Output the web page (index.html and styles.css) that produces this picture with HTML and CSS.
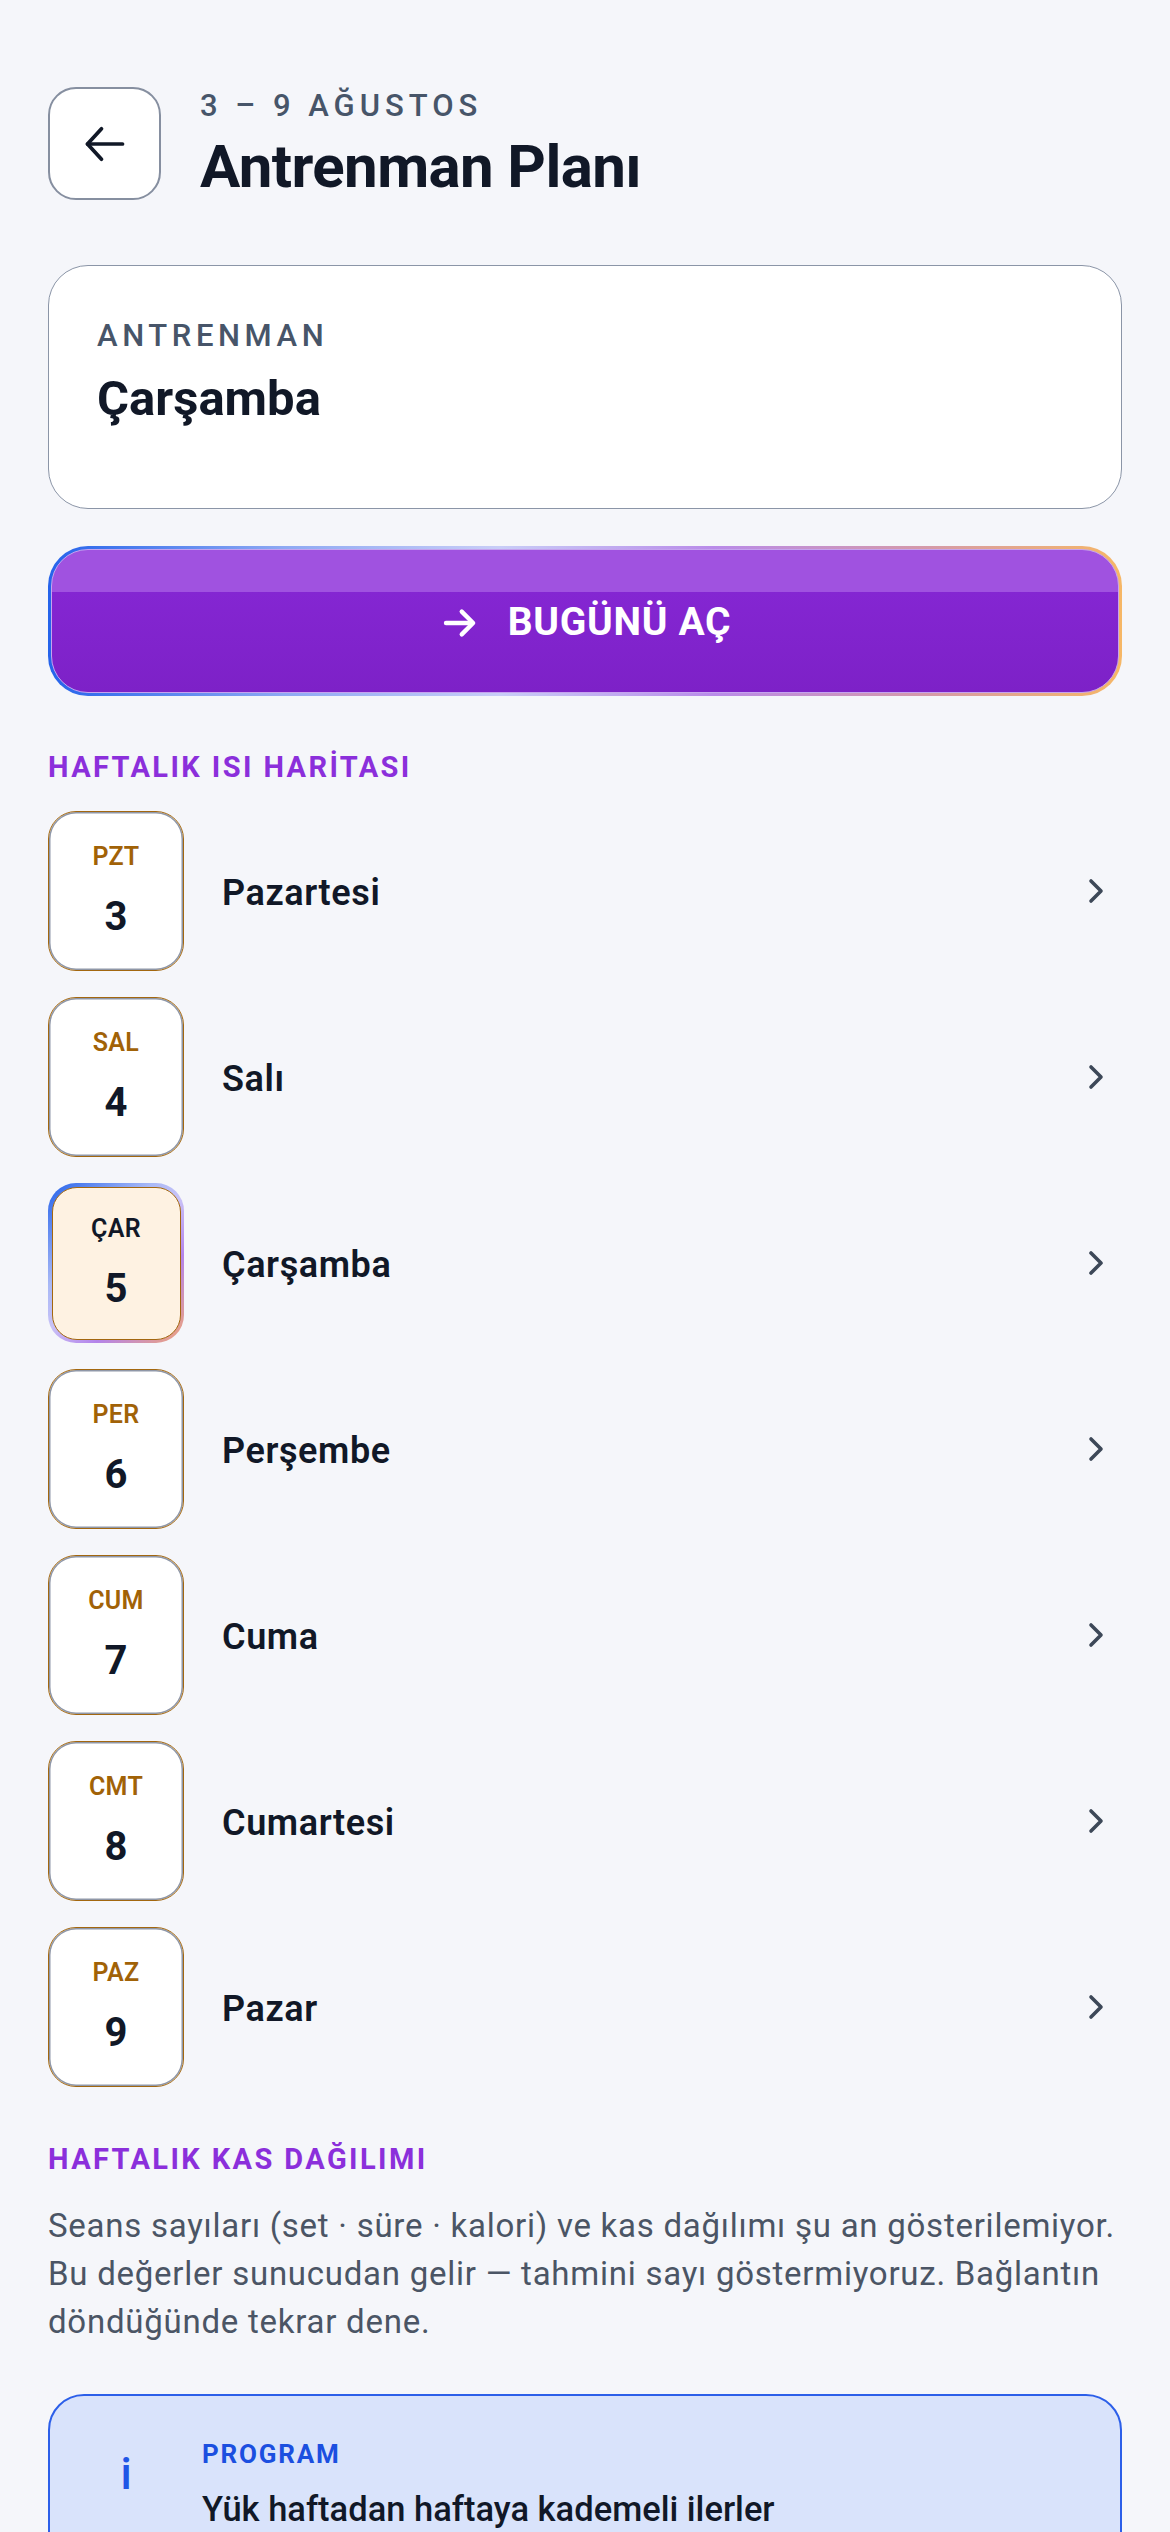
FILE: index.html
```html
<!DOCTYPE html>
<html lang="tr">
<head>
<meta charset="utf-8">
<title>Antrenman Planı</title>
<link rel="stylesheet" href="styles.css">
</head>
<body>
<div class="page">
  <header class="header">
    <button class="back-btn" aria-label="Geri">
      <svg width="56" height="56" viewBox="0 0 24 24" fill="none" stroke="#111827" stroke-width="1.6" stroke-linecap="round" stroke-linejoin="round"><path d="M19.5 12H4.5"/><path d="M10.5 5.5L4.5 12l6 6.5"/></svg>
    </button>
    <div class="header-text">
      <div class="header-label">3 – 9 AĞUSTOS</div>
      <h1 class="header-title">Antrenman Planı</h1>
    </div>
  </header>

  <section class="today-card">
    <div class="today-label">ANTRENMAN</div>
    <div class="today-name">Çarşamba</div>
  </section>

  <div class="cta-ring">
    <button class="cta">
      <svg width="42" height="42" viewBox="0 0 24 24" fill="none" stroke="#ffffff" stroke-width="2.5" stroke-linecap="round" stroke-linejoin="round"><path d="M4 12h15"/><path d="M13 5.5l6.5 6.5-6.5 6.5"/></svg>
      <span>BUGÜNÜ AÇ</span>
    </button>
  </div>

  <h2 class="section-title">HAFTALIK ISI HARİTASI</h2>

  <ul class="days">
    <li class="day">
      <div class="day-box"><span class="day-abbr">PZT</span><span class="day-num">3</span></div>
      <span class="day-name">Pazartesi</span>
      <svg class="chev" width="16" height="26" viewBox="0 0 16 26" fill="none" stroke="#3d4858" stroke-width="3.6" stroke-linecap="round" stroke-linejoin="round"><path d="M3 3l10 10-10 10"/></svg>
    </li>
    <li class="day">
      <div class="day-box"><span class="day-abbr">SAL</span><span class="day-num">4</span></div>
      <span class="day-name">Salı</span>
      <svg class="chev" width="16" height="26" viewBox="0 0 16 26" fill="none" stroke="#3d4858" stroke-width="3.6" stroke-linecap="round" stroke-linejoin="round"><path d="M3 3l10 10-10 10"/></svg>
    </li>
    <li class="day day-today">
      <div class="day-ring"><div class="day-box"><span class="day-abbr">ÇAR</span><span class="day-num">5</span></div></div>
      <span class="day-name">Çarşamba</span>
      <svg class="chev" width="16" height="26" viewBox="0 0 16 26" fill="none" stroke="#3d4858" stroke-width="3.6" stroke-linecap="round" stroke-linejoin="round"><path d="M3 3l10 10-10 10"/></svg>
    </li>
    <li class="day">
      <div class="day-box"><span class="day-abbr">PER</span><span class="day-num">6</span></div>
      <span class="day-name">Perşembe</span>
      <svg class="chev" width="16" height="26" viewBox="0 0 16 26" fill="none" stroke="#3d4858" stroke-width="3.6" stroke-linecap="round" stroke-linejoin="round"><path d="M3 3l10 10-10 10"/></svg>
    </li>
    <li class="day">
      <div class="day-box"><span class="day-abbr">CUM</span><span class="day-num">7</span></div>
      <span class="day-name">Cuma</span>
      <svg class="chev" width="16" height="26" viewBox="0 0 16 26" fill="none" stroke="#3d4858" stroke-width="3.6" stroke-linecap="round" stroke-linejoin="round"><path d="M3 3l10 10-10 10"/></svg>
    </li>
    <li class="day">
      <div class="day-box"><span class="day-abbr">CMT</span><span class="day-num">8</span></div>
      <span class="day-name">Cumartesi</span>
      <svg class="chev" width="16" height="26" viewBox="0 0 16 26" fill="none" stroke="#3d4858" stroke-width="3.6" stroke-linecap="round" stroke-linejoin="round"><path d="M3 3l10 10-10 10"/></svg>
    </li>
    <li class="day">
      <div class="day-box"><span class="day-abbr">PAZ</span><span class="day-num">9</span></div>
      <span class="day-name">Pazar</span>
      <svg class="chev" width="16" height="26" viewBox="0 0 16 26" fill="none" stroke="#3d4858" stroke-width="3.6" stroke-linecap="round" stroke-linejoin="round"><path d="M3 3l10 10-10 10"/></svg>
    </li>
  </ul>

  <h2 class="section-title section-title-2">HAFTALIK KAS DAĞILIMI</h2>
  <p class="note">Seans sayıları (set · süre · kalori) ve kas dağılımı şu an gösterilemiyor. Bu değerler sunucudan gelir — tahmini sayı göstermiyoruz. Bağlantın döndüğünde tekrar dene.</p>

  <section class="info-card">
    <div class="info-icon">i</div>
    <div class="info-body">
      <div class="info-label">PROGRAM</div>
      <div class="info-title">Yük haftadan haftaya kademeli ilerler</div>
    </div>
  </section>
</div>
</body>
</html>
```

FILE: styles.css
```css
* { box-sizing: border-box; }
html, body { margin: 0; padding: 0; }
body {
  background: #f5f6fa;
  font-family: Roboto, "Noto Sans", "Liberation Sans", sans-serif;
  color: #111827;
}
.page {
  padding: 87px 48px 40px;
}
.header {
  display: flex;
  align-items: flex-start;
  gap: 39px;
}
.back-btn {
  width: 113px;
  height: 113px;
  flex: none;
  border: 2.5px solid #868fa0;
  border-radius: 28px;
  background: #ffffff;
  display: flex;
  align-items: center;
  justify-content: center;
  padding: 0;
}
.header-text {
  padding-top: 1px;
}
.header-label {
  font-size: 31px;
  line-height: 36px;
  font-weight: 500;
  letter-spacing: 5px;
  color: #475569;
}
.header-title {
  margin: 10px 0 0;
  font-size: 60px;
  line-height: 66px;
  font-weight: 700;
  letter-spacing: -0.6px;
  color: #111827;
}
.today-card {
  margin-top: 65px;
  background: #ffffff;
  border: 1.5px solid #8b95a7;
  border-radius: 40px;
  padding: 52px 48px 81px;
}
.today-label {
  font-size: 31px;
  line-height: 36px;
  font-weight: 500;
  letter-spacing: 4.6px;
  color: #475569;
}
.today-name {
  margin-top: 17px;
  font-size: 49px;
  line-height: 56px;
  font-weight: 700;
  color: #111827;
}
.cta-ring {
  margin-top: 37px;
  height: 150px;
  border-radius: 40px;
  padding: 3px;
  background: linear-gradient(90deg, #2563eb 0%, #8ea9f3 22%, #c8cdf7 42%, #b98be9 62%, #d59aa8 82%, #f6b766 100%);
}
.cta {
  width: 100%;
  height: 100%;
  border: 1.5px solid #c5a3ef;
  border-radius: 37px;
  background: linear-gradient(180deg, #a052e0 0, #a052e0 42px, #8426d2 42px, #7d21c7 100%);
  display: flex;
  align-items: center;
  justify-content: center;
  gap: 27px;
  color: #ffffff;
  font-family: Roboto, "Noto Sans", sans-serif;
  font-size: 39px;
  font-weight: 700;
  letter-spacing: 0.7px;
  padding: 2px 0 0;
}
.cta svg { margin-top: 2px; }
.section-title {
  margin: 54px 0 0;
  font-size: 29px;
  line-height: 34px;
  font-weight: 700;
  letter-spacing: 2.4px;
  color: #8b2fdb;
}
.days {
  list-style: none;
  margin: 27px 0 0;
  padding: 0;
  display: flex;
  flex-direction: column;
  gap: 26px;
}
.day {
  display: flex;
  align-items: center;
  gap: 38px;
}
.day-box {
  width: 136px;
  height: 160px;
  flex: none;
  border: 1.5px solid #a3670f;
  box-shadow: inset 0 0 0 1.5px #8f97a8;
  border-radius: 28px;
  background: #ffffff;
  display: flex;
  flex-direction: column;
  align-items: center;
  justify-content: center;
  gap: 21px;
  padding-top: 1px;
}
.day-abbr {
  font-size: 25px;
  line-height: 30px;
  font-weight: 600;
  color: #a16207;
  letter-spacing: 0.3px;
}
.day-num {
  font-size: 40px;
  line-height: 48px;
  font-weight: 700;
  color: #111827;
}
.day-name {
  flex: 1;
  font-size: 36px;
  line-height: 44px;
  font-weight: 600;
  letter-spacing: 0.6px;
  color: #111827;
  padding-top: 3px;
}
.chev {
  flex: none;
  margin-right: 18px;
}
.day-ring {
  width: 136px;
  height: 160px;
  flex: none;
  border-radius: 28px;
  padding: 3.5px;
  background: linear-gradient(135deg, #2563eb 0%, #a9b9f6 35%, #c9c2f7 50%, #b484ea 70%, #f0a477 100%);
}
.day-today .day-box {
  width: 100%;
  height: 100%;
  border: 1.5px solid #a3670f;
  box-shadow: none;
  border-radius: 25px;
  background: #fef2e2;
}
.day-today .day-abbr { color: #111827; }
.section-title-2 { margin-top: 55px; }
.note {
  margin: 26px 0 0;
  font-size: 33px;
  line-height: 48px;
  letter-spacing: 0.75px;
  color: #4b5565;
}
.info-card {
  margin-top: 48px;
  background: #d9e3fb;
  border: 2px solid #2c5fe9;
  border-radius: 36px;
  padding: 42px 48px 40px 44px;
  display: flex;
  gap: 44px;
}
.info-icon {
  width: 64px;
  flex: none;
  text-align: center;
  font-size: 44px;
  line-height: 48px;
  font-weight: 500;
  color: #1f56e6;
  padding-top: 12px;
}
.info-label {
  font-size: 26px;
  line-height: 32px;
  font-weight: 700;
  letter-spacing: 1.8px;
  color: #1b4fe0;
}
.info-title {
  margin-top: 19px;
  font-size: 34.5px;
  line-height: 40px;
  font-weight: 500;
  color: #111827;
}
```
